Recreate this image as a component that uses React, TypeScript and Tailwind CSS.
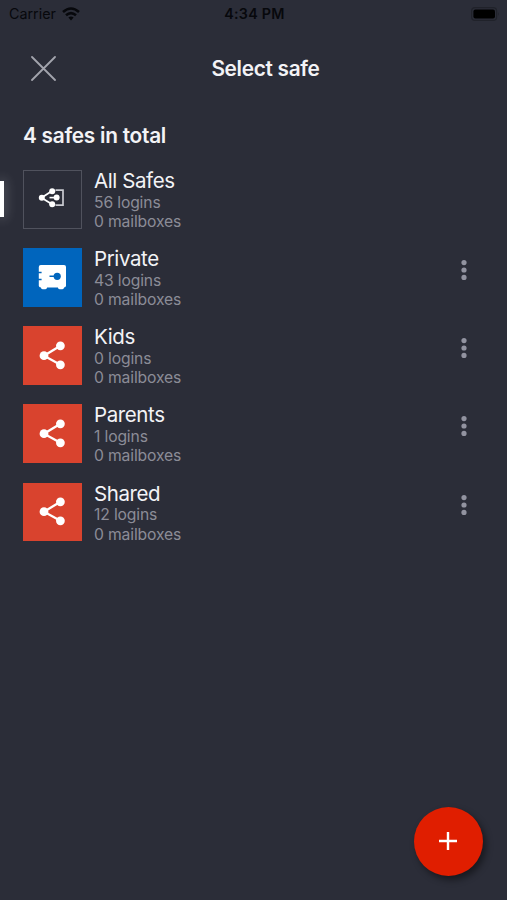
type IconKind = 'all' | 'private' | 'shared'

interface Safe {
  name: string
  logins: number
  mailboxes: number
  kind: IconKind
}

const SAFES: Safe[] = [
  { name: 'All Safes', logins: 56, mailboxes: 0, kind: 'all' },
  { name: 'Private', logins: 43, mailboxes: 0, kind: 'private' },
  { name: 'Kids', logins: 0, mailboxes: 0, kind: 'shared' },
  { name: 'Parents', logins: 1, mailboxes: 0, kind: 'shared' },
  { name: 'Shared', logins: 12, mailboxes: 0, kind: 'shared' },
]

const TILE: Record<IconKind, string> = {
  all: 'border-[1.5px] border-[#50525d]',
  private: 'bg-[#0065bd]',
  shared: 'bg-[#d9432e]',
}

function SafeIcon({ kind }: { kind: IconKind }) {
  if (kind === 'all') {
    return (
      <svg viewBox="0 0 59 59" className="w-[59px] h-[59px] shrink-0" fill="none" stroke="#fff">
        <path d="M29 21 L18.5 27.8 L29 34.3" strokeWidth="1.8" />
        <path d="M26.5 27.6 H33" strokeWidth="1.6" />
        <path d="M32.5 20.2 H40 V35.2 H32.5" strokeWidth="1.7" stroke="#c9cad0" />
        <g fill="#fff" stroke="none">
          <circle cx="18.8" cy="27.8" r="3" />
          <circle cx="29.2" cy="21.2" r="3" />
          <circle cx="29.2" cy="34.2" r="3" />
          <circle cx="33.6" cy="27.6" r="3" />
        </g>
      </svg>
    )
  }
  if (kind === 'private') {
    return (
      <svg viewBox="0 0 59 59" className="w-[59px] h-[59px] shrink-0" fill="#fff">
        <rect x="15.8" y="17" width="27.2" height="22.6" rx="2" />
        <rect x="18" y="37.5" width="6" height="3.7" rx="1.6" />
        <rect x="35" y="37.5" width="6" height="3.7" rx="1.6" />
        <path d="M15 24.4 H18.6 M15 31.6 H18.6 M26.5 28.3 H33" stroke="#0065bd" strokeWidth="1.5" />
        <circle cx="34.2" cy="28.3" r="3.6" fill="#0065bd" />
      </svg>
    )
  }
  return (
    <svg viewBox="0 0 59 59" className="w-[59px] h-[59px] shrink-0" fill="#fff">
      <path d="M37.4 19.8 L21 29.7 L37.4 38.8" fill="none" stroke="#fff" strokeWidth="2.3" />
      <circle cx="21" cy="29.7" r="4.4" />
      <circle cx="37.4" cy="19.8" r="4.4" />
      <circle cx="37.4" cy="38.8" r="4.4" />
    </svg>
  )
}

function SafeRow({ safe }: { safe: Safe }) {
  return (
    <li className="relative h-[78.15px] pl-[23px] pr-[39px] flex items-start">
      {/* Selected marker */}
      {safe.kind === 'all' && (
        <span className="absolute left-0 top-[11px] w-[3.5px] h-9 bg-white shadow-[0_0_12px_2px_rgba(255,255,255,0.2)]" />
      )}
      <div className={`w-[58.5px] h-[58.5px] shrink-0 flex items-center justify-center ${TILE[safe.kind]}`}>
        <SafeIcon kind={safe.kind} />
      </div>
      <div className="flex-1 ml-[12.5px] flex flex-col whitespace-nowrap">
        <span className="text-[20.5px] leading-[22px] tracking-[-0.4px] text-[#f3f3f6]">{safe.name}</span>
        <span className="mt-[0.7px] text-[15.7px] leading-[19.3px] tracking-[-0.15px] text-[#8b8c97]">{safe.logins} logins</span>
        <span className="text-[15.7px] leading-[19.3px] tracking-[-0.15px] text-[#8b8c97]">{safe.mailboxes} mailboxes</span>
      </div>
      {safe.kind !== 'all' && (
        <button aria-label="More" className="mt-3">
          <svg viewBox="0 0 8 20" className="w-2 h-5" fill="#9293a0">
            <circle cx="4" cy="2.6" r="2.6" />
            <circle cx="4" cy="10" r="2.6" />
            <circle cx="4" cy="17.4" r="2.6" />
          </svg>
        </button>
      )}
    </li>
  )
}

export default function App() {
  return (
    <div className="relative w-[507px] h-[900px] overflow-hidden bg-[#2b2d38] font-['Inter','Liberation_Sans',sans-serif] flex flex-col">
      {/* Status bar */}
      <div className="h-[27px] pl-[9px] pr-[7px] grid grid-cols-3 items-center text-[14.3px] text-[#07080c]">
        <div className="flex items-center gap-[6px]">
          <span>Carrier</span>
          <svg viewBox="0 0 18 14" className="w-[18px] h-[14px]" fill="none" stroke="#07080c" strokeWidth="2.6">
            <path d="M1 5 Q9 -2 17 5" />
            <path d="M4 8.3 Q9 4 14 8.3" />
            <path d="M6.4 10.6 Q9 8.6 11.6 10.6 L9 13.4 Z" fill="#07080c" stroke="none" />
          </svg>
        </div>
        <span className="text-center font-semibold tracking-[0.25px]">4:34 PM</span>
        <svg viewBox="0 0 29 14" className="w-[29px] h-[14px] justify-self-end">
          <rect x="0.6" y="0.6" width="25" height="12.8" rx="3.5" fill="none" stroke="#20222a" strokeWidth="1.2" />
          <rect x="2.4" y="2.4" width="21.6" height="9.2" rx="2" fill="#000" />
          <path d="M27 5 Q28.6 7 27 9 Z" fill="#20222a" />
        </svg>
      </div>

      {/* Header */}
      <header className="h-[83px] px-[31px] grid grid-cols-[25px_1fr_25px] items-center">
        <button aria-label="Close">
          <svg viewBox="0 0 25 25" className="w-[25px] h-[25px]" stroke="#a3a4ad" strokeWidth="1.8" strokeLinecap="round">
            <path d="M1 1 L24 24 M24 1 L1 24" />
          </svg>
        </button>
        <h1 className="pl-6 text-center text-[20.8px] tracking-[-0.3px] font-semibold text-[#f3f3f6]">Select safe</h1>
      </header>

      <h2 className="h-[60px] pl-[23px] pt-3 text-[20.8px] leading-7 tracking-[-0.25px] font-semibold text-[#f3f3f6]">
        4 safes in total
      </h2>

      <ul className="flex flex-col">
        {SAFES.map((safe) => (
          <SafeRow key={safe.name} safe={safe} />
        ))}
      </ul>

      {/* Add button */}
      <button
        aria-label="Add safe"
        className="absolute left-[414px] top-[807px] w-[68.5px] h-[68.5px] rounded-full bg-[#e01e00] flex items-center justify-center shadow-[3px_4px_7px_rgba(0,0,0,0.45)]"
      >
        <svg viewBox="0 0 18 18" className="w-[18px] h-[18px]" stroke="#fff" strokeWidth="2.4">
          <path d="M9 0 V18 M0 9 H18" />
        </svg>
      </button>
    </div>
  )
}
